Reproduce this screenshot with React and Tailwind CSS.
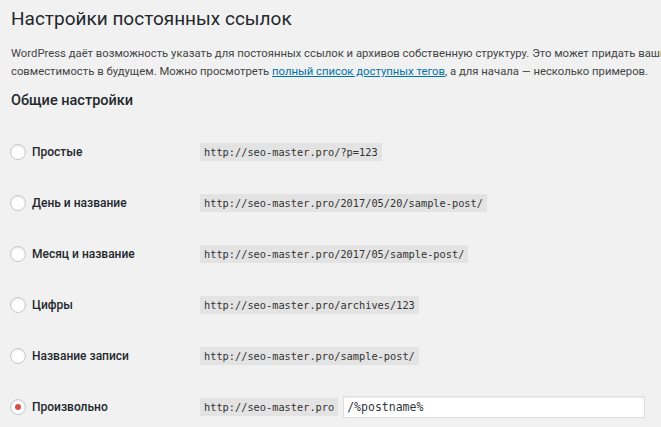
const rows = [
  { label: "Простые", url: "http://seo-master.pro/?p=123" },
  { label: "День и название", url: "http://seo-master.pro/2017/05/20/sample-post/" },
  { label: "Месяц и название", url: "http://seo-master.pro/2017/05/sample-post/" },
  { label: "Цифры", url: "http://seo-master.pro/archives/123" },
  { label: "Название записи", url: "http://seo-master.pro/sample-post/" },
];

const sans = { fontFamily: 'Roboto, "Noto Sans", sans-serif' };
const mono = { fontFamily: '"DejaVu Sans Mono", monospace' };

function Radio({ checked = false }) {
  return (
    <span className="flex h-[16px] w-[16px] shrink-0 items-center justify-center rounded-full border border-[#c4c8cc] bg-white shadow-[inset_0_1px_2px_rgba(0,0,0,0.1)]">
      {checked && <span className="h-[6px] w-[6px] rounded-full bg-[#d64e48]" />}
    </span>
  );
}

function Code({ children }) {
  return (
    <code
      className="bg-[#e3e3e3] px-[4px] py-[2px] text-[10.3px] leading-[14px] text-[#333]"
      style={mono}
    >
      {children}
    </code>
  );
}

function Row({ label, checked, children }) {
  return (
    <div className="flex h-[51px] items-center">
      <label className="flex w-[190px] items-center gap-[6px]">
        <Radio checked={checked} />
        <span className="text-[12px] font-medium text-[#23282d]">{label}</span>
      </label>
      {children}
    </div>
  );
}

export default function App() {
  return (
    <div className="h-[427px] w-[661px] overflow-hidden bg-[#f1f1f1] pl-[10px]" style={sans}>
      <h1 className="pt-[4px] pl-[1px] text-[19px] leading-[30px] font-normal text-[#23282d]">
        Настройки постоянных ссылок
      </h1>
      <p className="mt-[11px] pl-[1px] text-[11.3px] leading-[18px] whitespace-nowrap text-[#444]">
        WordPress даёт возможность указать для постоянных ссылок и архивов собственную структуру. Это может придать вашим ссылкам
        <br />
        совместимость в будущем. Можно просмотреть{" "}
        <a href="#" className="text-[#0073aa] underline">полный список доступных тегов</a>, а для начала — несколько примеров.
      </p>
      <h2 className="mt-[10px] pl-[1px] text-[14.5px] leading-[20px] font-medium text-[#23282d]">Общие настройки</h2>
      <div className="mt-[15px]">
        {rows.map((row) => (
          <Row key={row.label} label={row.label}>
            <Code>{row.url}</Code>
          </Row>
        ))}
        <Row label="Произвольно" checked>
          <Code>http://seo-master.pro</Code>
          <input
            readOnly
            value="/%postname%"
            className="ml-[5px] h-[22px] w-[302px] border border-[#ddd] bg-white px-[3px] text-[11.5px] text-[#32373c] shadow-[inset_0_1px_2px_rgba(0,0,0,0.07)] outline-none"
            style={mono}
          />
        </Row>
      </div>
    </div>
  );
}
